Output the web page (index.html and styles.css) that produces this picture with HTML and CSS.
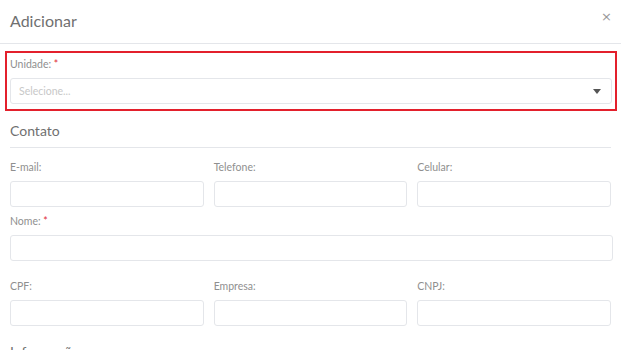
FILE: index.html
```html
<!DOCTYPE html>
<html lang="pt-BR">
<head>
    <meta charset="UTF-8">
    <meta name="viewport" content="width=device-width, initial-scale=1.0">
    <title>Adicionar</title>
    <link rel="stylesheet" href="styles.css">
</head>
<body>
    <div class="modal">
        <header class="modal-header">
            <h1>Adicionar</h1>
            <button class="close-btn" type="button">&times;</button>
        </header>

        <div class="modal-body">
            <!-- Unidade (destacado) -->
            <div class="field highlight">
                <label for="unidade">Unidade: <span class="req">*</span></label>
                <div class="select">
                    <span class="placeholder">Selecione...</span>
                    <span class="caret"></span>
                </div>
            </div>

            <h2 class="section-title">Contato</h2>

            <div class="row three">
                <div class="field">
                    <label for="email">E-mail:</label>
                    <input type="text" id="email">
                </div>
                <div class="field">
                    <label for="telefone">Telefone:</label>
                    <input type="text" id="telefone">
                </div>
                <div class="field">
                    <label for="celular">Celular:</label>
                    <input type="text" id="celular">
                </div>
            </div>

            <div class="field nome">
                <label for="nome">Nome: <span class="req">*</span></label>
                <input type="text" id="nome">
            </div>

            <div class="row three cpf-row">
                <div class="field">
                    <label for="cpf">CPF:</label>
                    <input type="text" id="cpf">
                </div>
                <div class="field">
                    <label for="empresa">Empresa:</label>
                    <input type="text" id="empresa">
                </div>
                <div class="field">
                    <label for="cnpj">CNPJ:</label>
                    <input type="text" id="cnpj">
                </div>
            </div>

            <h2 class="section-title next">Informações</h2>
        </div>
    </div>
</body>
</html>
```

FILE: styles.css
```css
* {
    box-sizing: border-box;
    margin: 0;
    padding: 0;
}

body {
    font-family: 'Lato', 'Open Sans', sans-serif;
    background-color: #fff;
    color: #666;
    overflow: hidden;
}

.modal-header {
    display: flex;
    align-items: center;
    justify-content: space-between;
    height: 44px;
    padding: 0 9px 2px 10px;
    border-bottom: 1px solid #e4e6ea;
}

.modal-header h1 {
    font-size: 16px;
    font-weight: 400;
    color: #707070;
}

.close-btn {
    background: none;
    border: none;
    font-family: 'DejaVu Sans', sans-serif;
    font-size: 13px;
    color: #999;
    margin-top: -8px;
    cursor: pointer;
}

.modal-body {
    padding: 7px 10px 0 10px;
}

.field label {
    display: block;
    font-size: 10.5px;
    line-height: 14px;
    color: #8f8f8f;
    margin-bottom: 7px;
}

.req {
    color: #e0303a;
}

.highlight {
    margin: 0 -6px 0 -5px;
    padding: 4px 3px 5px 3px;
    border: 2px solid #e3202c;
}

.select {
    display: flex;
    align-items: center;
    justify-content: space-between;
    height: 26px;
    padding: 0 10px 0 8px;
    border: 1px solid #e4e6ea;
    border-radius: 3px;
}

.placeholder {
    font-size: 10.5px;
    color: #c8c8c8;
}

.caret {
    width: 0;
    height: 0;
    border-left: 4.5px solid transparent;
    border-right: 4.5px solid transparent;
    border-top: 5px solid #555;
}

.section-title {
    font-size: 14px;
    font-weight: 400;
    line-height: 20px;
    color: #707070;
    margin: 10px 0 0 0;
    padding-bottom: 6px;
    border-bottom: 1px solid #e4e6ea;
}

.section-title.next {
    margin-top: 16px;
    border-bottom: none;
}

.row {
    display: grid;
    gap: 10px;
}

.row.three {
    grid-template-columns: 1fr 1fr 1fr;
    margin-top: 12px;
}

.row.cpf-row {
    margin-top: 18px;
}

.field input {
    display: block;
    width: 100%;
    height: 26px;
    border: 1px solid #e4e6ea;
    border-radius: 3px;
    background: #fff;
}

.nome {
    margin-top: 7px;
    margin-right: -2px;
}
```
